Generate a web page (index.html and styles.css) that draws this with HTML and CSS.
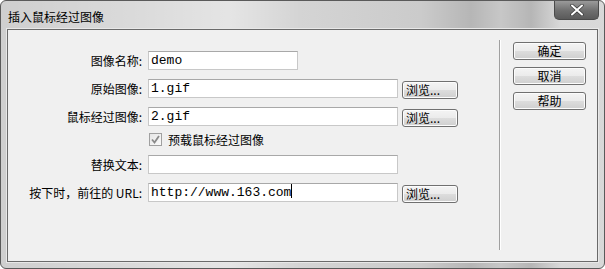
FILE: index.html
```html
<!DOCTYPE html>
<html lang="zh-CN">
<head>
	<meta charset="UTF-8">
	<title>插入鼠标经过图像</title>
	<link rel="stylesheet" href="styles.css">
</head>
<body>
	<div class="window">
		<div class="titlebar">
			<div class="title">插入鼠标经过图像</div>
			<div class="close">
				<svg width="16" height="12" viewBox="0 0 16 12">
					<path d="M3 1.5 L13 10.5 M13 1.5 L3 10.5" stroke="#3a3a3a" stroke-width="3.4" stroke-linecap="round"/>
					<path d="M3 1.5 L13 10.5 M13 1.5 L3 10.5" stroke="#fff" stroke-width="2" stroke-linecap="round"/>
				</svg>
			</div>
		</div>
		<div class="client">
			<div class="form">
				<div class="row">
					<div class="label">图像名称:</div>
					<div class="input short">demo</div>
				</div>
				<div class="row">
					<div class="label">原始图像:</div>
					<div class="input">1.gif</div>
					<div class="btn browse">浏览...</div>
				</div>
				<div class="row">
					<div class="label">鼠标经过图像:</div>
					<div class="input">2.gif</div>
					<div class="btn browse">浏览...</div>
				</div>
				<div class="row check-row">
					<div class="label"></div>
					<div class="checkbox">
						<svg width="9" height="9" viewBox="0 0 9 9">
							<path d="M1 4.5 L3.5 7.5 L8 1" fill="none" stroke="#8a8a8a" stroke-width="1.8"/>
						</svg>
					</div>
					<div class="check-text">预载鼠标经过图像</div>
				</div>
				<div class="row">
					<div class="label">替换文本:</div>
					<div class="input"></div>
				</div>
				<div class="row">
					<div class="label">按下时，前往的 URL:</div>
					<div class="input">http://www.163.com<span class="caret"></span></div>
					<div class="btn browse">浏览...</div>
				</div>
			</div>
			<div class="sep"></div>
			<div class="side">
				<div class="btn action">确定</div>
				<div class="btn action">取消</div>
				<div class="btn action">帮助</div>
			</div>
		</div>
	</div>
</body>
</html>
```

FILE: styles.css
```css
html,body{
	margin:0;
	padding:0;
	background:#fff;
}
body{
	font-family:"Noto Sans CJK SC","Liberation Sans",sans-serif;
	font-size:12px;
	color:#000;
}
.window{
	width:603px;
	height:267px;
	border:1px solid #5a5a5a;
	border-radius:6px;
	background:
		linear-gradient(90deg,
			rgba(255,255,255,0) 0px,
			rgba(255,255,255,0.25) 140px,
			rgba(255,255,255,0.45) 230px,
			rgba(255,255,255,0.1) 300px,
			rgba(0,0,0,0.02) 420px,
			rgba(0,0,0,0.12) 470px,
			rgba(0,0,0,0.04) 500px,
			rgba(0,0,0,0.12) 530px,
			rgba(255,255,255,0.2) 560px),
		#cfcfcf;
	display:flex;
	flex-direction:column;
	overflow:hidden;
}
.titlebar{
	height:28px;
	display:flex;
	justify-content:space-between;
	align-items:flex-start;
}
.title{
	margin:9px 0 0 7px;
	line-height:14px;
}
.close{
	width:43px;
	height:18px;
	margin-right:5px;
	border:1px solid #4a4a4a;
	border-top:none;
	border-radius:0 0 5px 5px;
	background:linear-gradient(#9a9a9a,#6e6e6e 55%,#5a5a5a);
	display:flex;
	justify-content:center;
	align-items:center;
}
.client{
	margin:0 6px;
	height:231px;
	border:1px solid #6a6a6a;
	box-shadow:0 0 0 1px #e8e8e8;
	background:#f0f0f0;
	display:flex;
}
.form{
	width:491px;
	padding-top:21px;
}
.row{
	height:19px;
	margin-bottom:9px;
	display:flex;
	align-items:center;
}
.check-row{
	height:14px;
	margin-top:-3px;
}
.label{
	width:134px;
	margin-right:6px;
	text-align:right;
	white-space:nowrap;
}
.input{
	box-sizing:border-box;
	width:250px;
	height:19px;
	border:1px solid #c8c8c8;
	border-top-color:#a8a8a8;
	background:#fff;
	padding-left:2px;
	font-family:"Liberation Mono",monospace;
	font-size:13px;
	line-height:17px;
	white-space:nowrap;
}
.input.short{
	width:150px;
}
.caret{
	display:inline-block;
	width:1px;
	height:14px;
	background:#000;
	vertical-align:-2px;
}
.btn{
	box-sizing:border-box;
	height:18px;
	border:1px solid #707070;
	border-radius:3px;
	background:linear-gradient(#f4f4f4,#ebebeb 50%,#dddddd 51%,#cfcfcf);
	box-shadow:inset 0 0 0 1px #fcfcfc;
	line-height:16px;
	text-align:center;
}
.browse{
	width:56px;
	margin-left:4px;
	margin-top:2px;
	padding-left:3px;
	text-align:left;
}
.checkbox{
	box-sizing:border-box;
	width:13px;
	height:13px;
	margin-left:1px;
	border:1px solid #a0a0a0;
	background:linear-gradient(135deg,#e6e6e6,#fafafa);
	display:flex;
	justify-content:center;
	align-items:center;
}
.check-text{
	margin-left:6px;
}
.sep{
	width:1px;
	margin:10px 0 11px;
	background:#a0a0a0;
	box-shadow:1px 0 0 #fff;
}
.side{
	padding:12px 0 0 13px;
	display:flex;
	flex-direction:column;
	gap:7px;
}
.action{
	width:73px;
}
```
